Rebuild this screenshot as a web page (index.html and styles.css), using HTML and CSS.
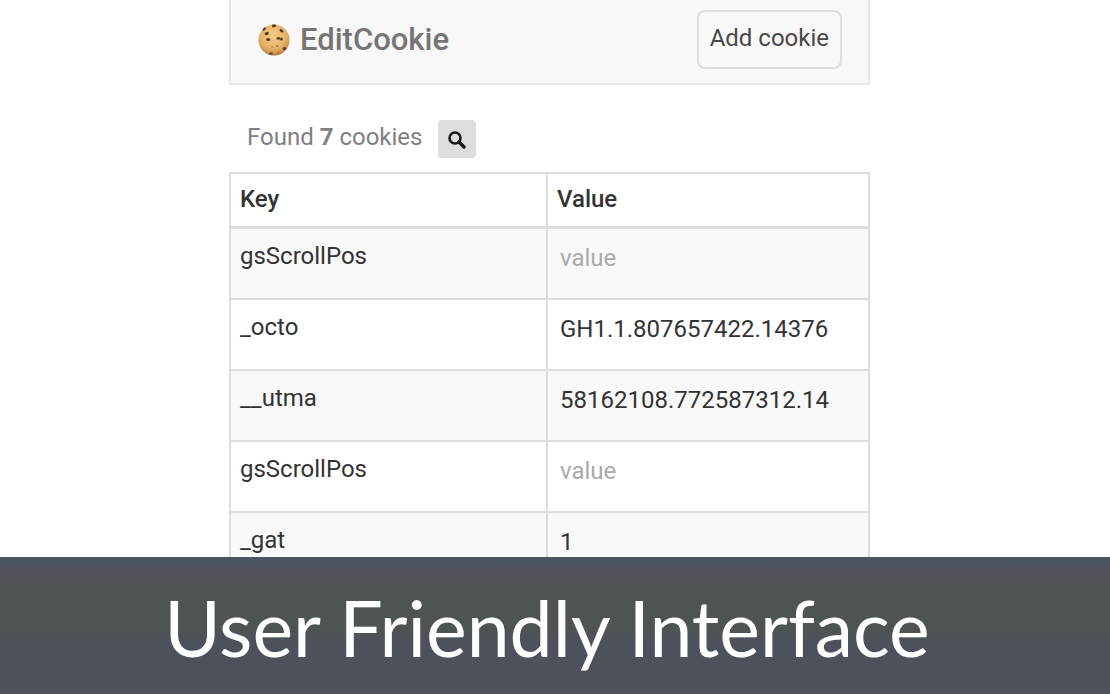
FILE: index.html
```html
<!DOCTYPE html>
<html lang="en">
<head>
<meta charset="utf-8">
<title>EditCookie</title>
<link rel="stylesheet" href="styles.css">
</head>
<body>
<div class="slide">
  <main class="stage">
    <div class="panel">
      <header class="navbar">
        <h1 class="brand">
          <svg class="brand-icon" viewBox="0 0 32 32" aria-hidden="true">
            <defs>
              <radialGradient id="dough" cx="0.48" cy="0.36" r="0.64">
                <stop offset="0" stop-color="#f3ca87"/>
                <stop offset="0.62" stop-color="#e6b46b"/>
                <stop offset="0.88" stop-color="#d09650"/>
                <stop offset="1" stop-color="#a87038"/>
              </radialGradient>
            </defs>
            <circle cx="16" cy="16" r="15.5" fill="url(#dough)"/>
            <g fill="#5c3a26">
              <ellipse cx="16" cy="1.8" rx="2.2" ry="1.5"/>
              <ellipse cx="6.3" cy="5" rx="2" ry="1.2" transform="rotate(-45 6.3 5)"/>
              <ellipse cx="8.7" cy="9.6" rx="2.1" ry="1.6" transform="rotate(-20 8.7 9.6)"/>
              <ellipse cx="23.5" cy="6.8" rx="2.2" ry="1.4" transform="rotate(35 23.5 6.8)"/>
              <ellipse cx="10.2" cy="15.5" rx="2.1" ry="1.5"/>
              <ellipse cx="20.3" cy="14.4" rx="1.8" ry="1.4"/>
              <ellipse cx="23.4" cy="15.1" rx="1.5" ry="1.5"/>
              <ellipse cx="26.5" cy="24.5" rx="1.8" ry="1.6"/>
              <ellipse cx="13" cy="29.6" rx="2" ry="1"/>
            </g>
            <g fill="#ad713b">
              <circle cx="14" cy="22.8" r="0.8"/>
              <circle cx="19.3" cy="22" r="1"/>
              <circle cx="20.2" cy="28.2" r="0.9"/>
            </g>
          </svg>
          EditCookie
        </h1>
        <button class="add-button" type="button">Add cookie</button>
      </header>
      <div class="summary">
        <p class="count">Found <strong>7</strong> cookies</p>
        <button class="search-button" type="button" aria-label="Search">
          <svg class="search-icon" viewBox="0 0 18 18" aria-hidden="true">
            <circle cx="7" cy="7" r="5.5" fill="none" stroke="#191919" stroke-width="2.6"/>
            <path d="M11 11l5 5" stroke="#191919" stroke-width="3.4" stroke-linecap="round"/>
          </svg>
        </button>
      </div>
      <table class="cookies">
        <thead>
          <tr><th class="key-column" scope="col">Key</th><th scope="col">Value</th></tr>
        </thead>
        <tbody>
          <tr><td>gsScrollPos</td><td><input class="value" type="text" placeholder="value" aria-label="gsScrollPos value"></td></tr>
          <tr><td>_octo</td><td><input class="value" type="text" value="GH1.1.807657422.14376" aria-label="_octo value"></td></tr>
          <tr><td>__utma</td><td><input class="value" type="text" value="58162108.772587312.14" aria-label="__utma value"></td></tr>
          <tr><td>gsScrollPos</td><td><input class="value" type="text" placeholder="value" aria-label="Second gsScrollPos value"></td></tr>
          <tr><td>_gat</td><td><input class="value" type="text" value="1" aria-label="_gat value"></td></tr>
        </tbody>
      </table>
    </div>
  </main>
  <footer class="caption">User Friendly Interface</footer>
</div>
</body>
</html>
```
FILE: styles.css
```css
* {
  box-sizing: border-box;
}

body {
  margin: 0;
  background: #fff;
  color: #333;
  font: 24px/34px Roboto, sans-serif;
}

.slide {
  display: flex;
  flex-direction: column;
  height: 100vh;
}

.stage {
  display: grid;
  grid-template-columns: 229fr 641fr 240fr;
  flex: 1;
  min-height: 0;
  overflow: hidden;
}

.panel {
  grid-column: 2;
}

.navbar {
  display: flex;
  align-items: center;
  justify-content: space-between;
  padding: 10px 26px 14px 27px;
  border: 2px solid #e7e7e7;
  border-top: 0;
  background: #f8f8f8;
}

.brand {
  display: flex;
  align-items: center;
  gap: 10px;
  margin: 0;
  color: #757575;
  font-size: 31px;
  font-weight: 500;
}

.brand-icon {
  width: 32px;
  height: 32px;
}

.add-button {
  padding: 9px 11px 12px;
  border: 2px solid #ddd;
  border-radius: 8px;
  background: transparent;
  color: #484848;
  font: inherit;
}

.summary {
  display: flex;
  align-items: center;
  gap: 16px;
  padding: 35px 18px 14px;
}

.count {
  margin: 0;
  padding-bottom: 4px;
  color: #808080;
}

.search-button {
  display: grid;
  place-items: center;
  width: 38px;
  height: 38px;
  padding: 2px 0 0;
  border: 0;
  border-radius: 4px;
  background: #ddd;
}

.search-icon {
  width: 18px;
  height: 18px;
}

.cookies {
  width: 100%;
  table-layout: fixed;
  border-collapse: collapse;
}

.key-column {
  width: 317px;
}

.cookies th,
.cookies td {
  height: 71px;
  padding: 10px 9px;
  border: 2px solid #ddd;
  text-align: left;
  vertical-align: top;
}

.cookies th {
  height: auto;
  padding: 8px 9px 10px;
  border-bottom-width: 3px;
  font-weight: 500;
}

.cookies tbody tr:nth-child(odd) {
  background: #f9f9f9;
}

.value {
  display: block;
  width: 100%;
  height: 36px;
  padding: 2px 3px 0;
  border: 0;
  outline: 0;
  background: transparent;
  color: #333;
  font: inherit;
}

.value::placeholder {
  color: #aaa;
}

.caption {
  padding: 22px 24px 19px 8px;
  background: linear-gradient(#4b5564, #51525a 16px, #4e5454 32px, #4e5454 72px, #4d515c 88px, #4d515c 128px, #505459);
  color: #fff;
  font: 77px/96px Lato, sans-serif;
  text-align: center;
}
```
